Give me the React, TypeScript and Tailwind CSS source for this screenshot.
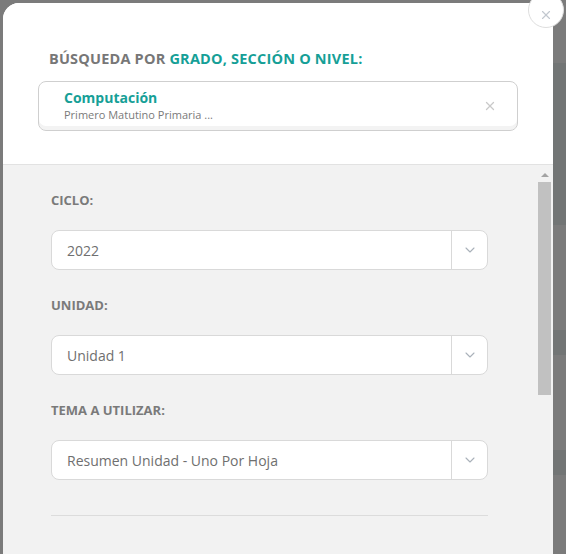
import { ChevronDown, X } from "lucide-react"

const SelectBox = ({ value }: { value: string }) => {
  return (
    <div className="flex h-[40px] w-[437px] items-stretch rounded-[8px] border border-[#d9d9d9] bg-white">
      <div className="flex flex-1 items-center pl-[15px] text-[14px] text-[#6f6f6f]">{value}</div>
      <div className="flex w-[36px] items-center justify-center border-l border-[#d9d9d9]">
        <ChevronDown size={16} strokeWidth={1.6} className="text-[#a9b1ba]" />
      </div>
    </div>
  )
}

const Field = ({ label, value }: { label: string; value: string }) => {
  return (
    <div className="flex flex-col">
      <div className="h-[18px] text-[13px] leading-[18px] font-bold text-[#7a7a7a]">{label}</div>
      <div className="mt-[21px]">
        <SelectBox value={value} />
      </div>
    </div>
  )
}

const App = () => {
  return (
    <div
      className="relative flex h-[554px] w-[566px] overflow-hidden bg-[#7b7b7b]"
      style={{ fontFamily: '"Open Sans", "Noto Sans", sans-serif' }}
    >
      {/* left strip of page behind */}
      <div className="w-[3px] bg-[#7b7b7b]"></div>

      {/* modal */}
      <div className="mt-[3px] flex h-[551px] w-[550px] flex-col overflow-hidden rounded-tl-[16px] bg-white">
        {/* header */}
        <div className="h-[162px] shrink-0 border-b border-[#e2e2e2] bg-white pt-[46px] pl-[35px]">
          <div className="pl-[11px] text-[14.5px] leading-[20px] font-bold tracking-[0.2px]">
            <span className="text-[#777777]">BÚSQUEDA POR </span>
            <span className="text-[#169f97]">GRADO, SECCIÓN O NIVEL:</span>
          </div>
          <div className="mt-[12px] flex h-[50px] w-[480px] items-center rounded-[8px] border border-[#cfcfcf] bg-white pr-[20px] pl-[25px] shadow-[inset_0_-4px_0_#f3f3f3]">
            <div className="flex flex-1 flex-col">
              <div className="text-[14px] leading-[18px] font-bold text-[#169f97]">Computación</div>
              <div className="text-[11px] leading-[16px] text-[#7a7a7a]">Primero Matutino Primaria ...</div>
            </div>
            <X size={14} strokeWidth={2.2} className="text-[#c9c9c9]" />
          </div>
        </div>

        {/* body */}
        <div className="flex flex-1 bg-[#f2f2f2]">
          <div className="flex w-[533px] flex-col gap-[26px] pt-[26px] pl-[48px]">
            <Field label="CICLO:" value="2022" />
            <Field label="UNIDAD:" value="Unidad 1" />
            <Field label="TEMA A UTILIZAR:" value="Resumen Unidad - Uno Por Hoja" />
            <div className="mt-[9px] h-px w-[437px] bg-[#dcdcdc]"></div>
          </div>
          {/* scrollbar */}
          <div className="flex w-[17px] flex-col items-center pt-[8px]">
            <div className="h-0 w-0 border-x-[4px] border-b-[4px] border-x-transparent border-b-[#a3a3a3]"></div>
            <div className="mt-[5px] h-[213px] w-[13px] bg-[#c1c1c1]"></div>
          </div>
        </div>
      </div>

      {/* right strip of page behind */}
      <div className="flex flex-1 flex-col">
        <div className="h-[63px] bg-[#7b7b7b]"></div>
        <div className="h-[162px] bg-[#727575]"></div>
        <div className="h-[105px] bg-[#7b7b7b]"></div>
        <div className="h-[25px] bg-[#727575]"></div>
        <div className="h-[95px] bg-[#7b7b7b]"></div>
        <div className="h-[25px] bg-[#727575]"></div>
        <div className="flex-1 bg-[#7b7b7b]"></div>
      </div>

      {/* close button */}
      <button className="absolute top-[-8px] left-[528px] flex h-[36px] w-[36px] items-center justify-center rounded-full border border-[#dedede] bg-white pt-[10px]">
        <X size={14} strokeWidth={2} className="text-[#c2c8cf]" />
      </button>
    </div>
  )
}

export default App
